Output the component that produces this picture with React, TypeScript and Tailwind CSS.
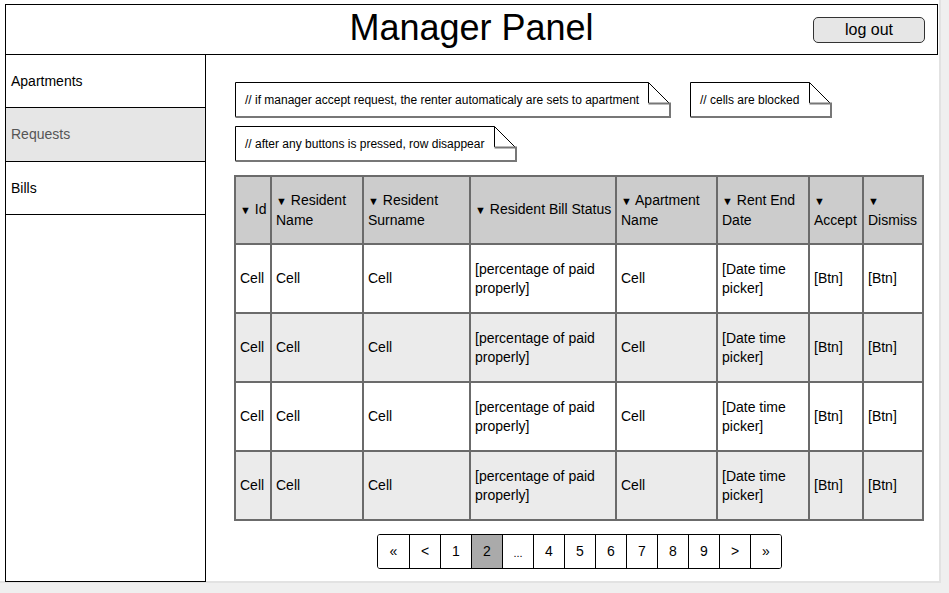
import React from 'react';

const font = { fontFamily: '"Liberation Sans", Arial, sans-serif' };

const columns = [
  { label: 'Id', width: 36, nowrap: true },
  { label: 'Resident Name', width: 92 },
  { label: 'Resident Surname', width: 107 },
  { label: 'Resident Bill Status', width: 146, nowrap: true },
  { label: 'Apartment Name', width: 101 },
  { label: 'Rent End Date', width: 92 },
  { label: 'Accept', width: 54 },
  { label: 'Dismiss', width: 60 },
];

const row = ['Cell', 'Cell', 'Cell', '[percentage of paid properly]', 'Cell', '[Date time picker]', '[Btn]', '[Btn]'];

const pages = ['«', '<', '1', '2', '...', '4', '5', '6', '7', '8', '9', '>', '»'];

// sticky-note with folded top-right corner
function Note({ text, width }: { text: string; width: number }) {
  return (
    <div className="relative h-[36px]" style={{ width }}>
      <svg className="absolute inset-0" width={width} height={36}>
        <path
          d={`M0.5 0.5 H${width - 22.5} L${width - 1} 22 V35 H0.5 Z`}
          fill="#fff"
          stroke="none"
        />
        <path d={`M0.5 35 V0.5 H${width - 22.5}`} fill="none" stroke="#000" strokeWidth="1" />
        <path d={`M${width - 22.5} 0.5 L${width - 1.5} 21.5`} fill="none" stroke="#000" strokeWidth="1" />
        <path d={`M${width - 22.5} 0.5 V21`} fill="none" stroke="#000" strokeWidth="1" />
        <path d={`M${width - 22.5} 21.5 H${width - 1} V35 H0.5`} fill="none" stroke="#777" strokeWidth="2" />
      </svg>
      <div className="relative h-full flex items-center pl-[10px] text-[12px] text-black">{text}</div>
    </div>
  );
}

export default function App() {
  return (
    <div className="w-[949px] h-[593px] bg-[#efefef] overflow-hidden" style={font}>
      <div className="w-[941px] h-[583px] bg-white border-r-2 border-b-2 border-[#e2e2e2] pt-[4px] pl-[5px]">
        {/* header */}
        <div className="w-[933px] h-[51px] border border-black relative flex items-center justify-center">
          <h1 className="text-[36px] leading-none text-black -mt-[3px]">Manager Panel</h1>
          <button className="absolute left-[807px] top-[12px] w-[112px] h-[26px] rounded-[5px] bg-[#e6e6e6] border border-[#333] text-[16px] leading-none text-black">
            log out
          </button>
        </div>

        <div className="flex">
          {/* sidebar */}
          <div className="w-[201px] h-[527px] border-x border-b border-black flex flex-col text-[14px]">
            <div className="h-[53px] border-b border-black flex items-center pl-[5px] text-black">Apartments</div>
            <div className="h-[54px] border-b border-black flex items-center pl-[5px] bg-[#e6e6e6] text-[#555]">Requests</div>
            <div className="h-[53px] border-b border-black flex items-center pl-[5px] text-black">Bills</div>
          </div>

          {/* main */}
          <div className="pl-[29px] pt-[27px]">
            <div className="flex gap-[19px]">
              <Note width={436} text="// if manager accept request, the renter automaticaly are sets to apartment" />
              <Note width={142} text="// cells are blocked" />
            </div>
            <div className="mt-[8px]">
              <Note width={282} text="// after any buttons is pressed, row disappear" />
            </div>

            <table className="mt-[13px] -ml-[1px] w-[688px] table-fixed border-collapse text-[14px] leading-[19px] text-black">
              <colgroup>
                {columns.map((c) => (
                  <col key={c.label} style={{ width: c.width }} />
                ))}
              </colgroup>
              <thead>
                <tr className="h-[68px] bg-[#cccccc]">
                  {columns.map((c) => (
                    <th
                      key={c.label}
                      className={
                        'border-2 border-[#6b6b6b] pl-[4px] pr-0 text-left font-normal align-middle ' +
                        (c.nowrap ? 'whitespace-nowrap' : '')
                      }
                    >
                      <span className="text-[11px]">▼</span> {c.label}
                    </th>
                  ))}
                </tr>
              </thead>
              <tbody>
                {[0, 1, 2, 3].map((r) => (
                  <tr key={r} className={r % 2 === 1 ? 'h-[69px] bg-[#ebebeb]' : 'h-[69px] bg-white'}>
                    {row.map((cell, i) => (
                      <td key={i} className="border-2 border-[#6b6b6b] pl-[4px] pr-0 align-middle">
                        {cell}
                      </td>
                    ))}
                  </tr>
                ))}
              </tbody>
            </table>

            {/* pagination */}
            <div className="mt-[13px] flex justify-center">
              <div className="flex border border-black rounded-[3px] overflow-hidden">
                {pages.map((p, i) => (
                  <div
                    key={i}
                    className={
                      'w-[31px] h-[33px] flex items-center justify-center text-[14px] text-black ' +
                      (i > 0 ? 'border-l border-black ' : '') +
                      (p === '2' ? 'bg-[#aaaaaa]' : 'bg-white')
                    }
                  >
                    {p === '...' ? <span className="text-[11px] mt-[4px]">...</span> : p}
                  </div>
                ))}
              </div>
            </div>
          </div>
        </div>
      </div>
    </div>
  );
}
